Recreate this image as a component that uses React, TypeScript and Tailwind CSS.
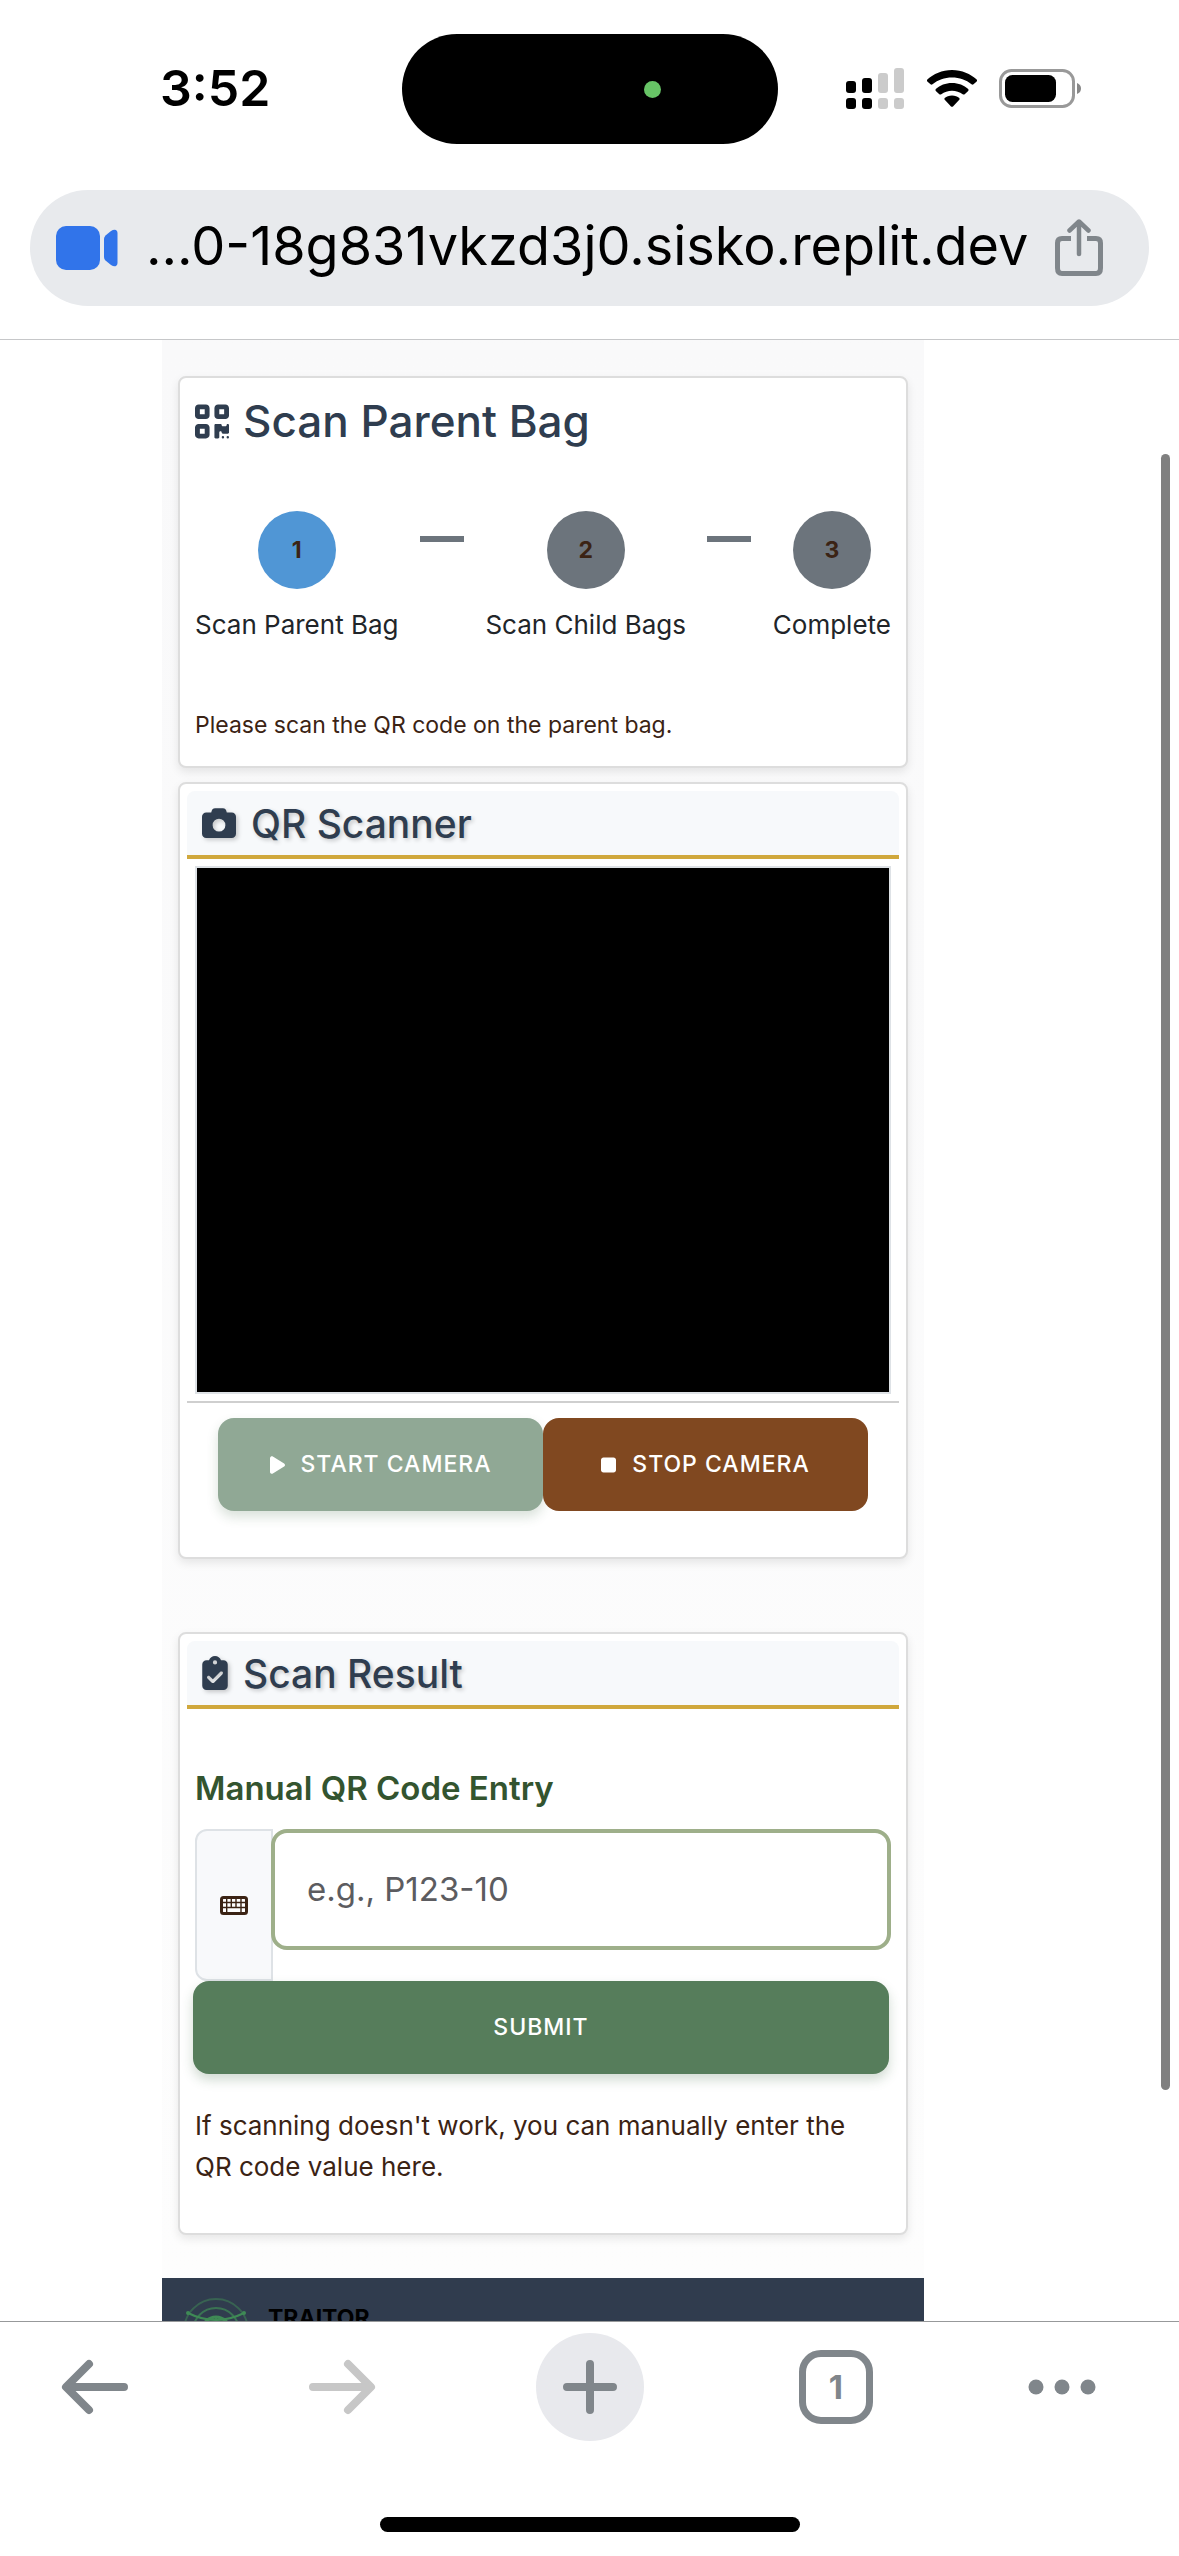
import type { ReactNode } from "react";
import { FaQrcode, FaCamera, FaPlay, FaStop, FaClipboardCheck } from "react-icons/fa6";

function StatusIcons() {
  return (
    <svg viewBox="846 67 235 41" className="h-[41px] w-[235px]" role="img" aria-label="Signal, Wi-Fi, battery">
      <rect x="846" y="80" width="10" height="12" rx="3" />
      <rect x="862" y="77" width="10" height="15" rx="3" />
      <rect x="846" y="97" width="10" height="11" rx="3" />
      <rect x="862" y="97" width="10" height="11" rx="3" />
      <g fill="#cbcbcb">
        <rect x="878" y="72" width="10" height="20" rx="3" />
        <rect x="894" y="67" width="10" height="25" rx="3" />
        <rect x="878" y="97" width="10" height="11" rx="3" />
        <rect x="894" y="97" width="10" height="11" rx="3" />
      </g>
      <path d="M952 69C942 69 933.500 73 927.300 78.500Q926.500 79.500 927.300 80.500L930.500 83.300Q931.500 84 932.500 83.300C938 79 944.500 76.600 952 76.600S966 79 971.500 83.300Q972.500 84 973.500 83.300L976.700 80.500Q977.500 79.500 976.700 78.500C970.500 73 962 69 952 69Z" />
      <path d="M952 82C945.500 82 940 84.300 935.800 88Q935 89 935.800 90L939.300 93.200Q940.300 94 941.300 93.200C944.300 91 948 89.800 952 89.800S959.700 91 962.700 93.200Q963.700 94 964.700 93.200L968.200 90Q969 89 968.200 88C964 84.300 958.500 82 952 82Z" />
      <path d="M952 94.500C949 94.500 946.500 95.500 944.700 97Q944 98 944.700 98.800L951 105.400Q952 106.200 953 105.400L959.300 98.800Q960 98 959.300 97C957.500 95.500 955 94.500 952 94.500Z" />
      <rect x="1000.500" y="69.500" width="73" height="36" rx="11" fill="none" stroke="#999" strokeWidth="3" />
      <rect x="1005" y="74" width="51" height="27" rx="7.500" />
      <path d="M1077 82Q1081 83.500 1081 87.500T1077 93Z" fill="#888" />
    </svg>
  );
}

function Card({ children, className }: { children: ReactNode; className: string }) {
  return (
    <section className={`rounded-lg border-2 border-[#dddddd] bg-white shadow-[0_4px_10px_rgba(0,0,0,0.09)] ${className}`}>
      {children}
    </section>
  );
}

function CardHeader({ icon, title }: { icon: ReactNode; title: string }) {
  return (
    <div className="mx-[7px] mt-[7px] flex h-[68px] items-center gap-[15px] rounded-t-lg border-b-4 border-[#d0a83c] bg-[#f7f9fb] px-[15px] text-[#2f3d4f]">
      <span className="drop-shadow-[2px_2px_2px_rgba(0,0,0,0.2)]">{icon}</span>
      <h2 className="text-[39px] leading-none font-medium [text-shadow:2px_2px_4px_rgba(0,0,0,0.2)]">{title}</h2>
    </div>
  );
}

function Step({ number, label, active = false }: { number: string; label: string; active?: boolean }) {
  return (
    <li className="flex flex-col items-center">
      <span
        className={`flex size-[78px] items-center justify-center rounded-full text-[23px] font-bold text-[#3b2314] ${active ? "bg-[#5096d5]" : "bg-[#6c747c]"}`}
      >
        {number}
      </span>
      <span className="mt-4 text-[26px] leading-10 whitespace-nowrap text-[#212529]">{label}</span>
    </li>
  );
}

function StepLine() {
  return <li aria-hidden="true" className="mt-[25px] h-1.5 w-11 bg-[#6c747c]" />;
}

export default function App() {
  return (
    <div className="flex h-screen flex-col overflow-hidden bg-white font-['Inter',sans-serif] text-black">
      <header className="shrink-0 border-b border-[#c6c7c9]">
        <div className="grid grid-cols-[1fr_auto_1fr] items-center pt-[34px]">
          <div className="pb-0.5 pl-40 text-[50px] leading-none font-semibold">3:52</div>
          <div className="flex h-[110px] w-[376px] items-center justify-end rounded-full bg-black pr-[117px]">
            <span className="size-[17px] rounded-full bg-[#67c466]" />
          </div>
          <div className="flex justify-end pr-[98px] pb-0.5">
            <StatusIcons />
          </div>
        </div>
        <div className="mx-[30px] mt-[46px] mb-[33px] flex h-[116px] items-center rounded-full bg-[#e8eaed] pr-[45px] pl-[26px]">
          <svg viewBox="0 0 62 44" className="h-11 w-[62px] shrink-0" fill="#3174ea" aria-hidden="true">
            <rect width="44" height="44" rx="10" />
            <path d="M48 13Q48 11 49.500 9.500L55 5Q58 3 60 4Q61.500 5 61.500 7V37Q61.500 39 60 40Q58 41 55 39L49.500 34.500Q48 33 48 31Z" />
          </svg>
          <input
            aria-label="Address"
            readOnly
            value="...0-18g831vkzd3j0.sisko.replit.dev"
            className="ml-7 h-20 min-w-0 flex-1 bg-transparent pb-1.5 text-[54px] outline-none"
          />
          <button aria-label="Share" className="shrink-0">
            <svg viewBox="0 0 50 58" className="h-[58px] w-[50px]" fill="none" stroke="#80868b" strokeWidth="5" strokeLinecap="round" strokeLinejoin="round">
              <path d="M17 19.500H8Q3.500 19.500 3.500 24V49Q3.500 54.500 8 54.500H42Q46.500 54.500 46.500 49V24Q46.500 19.500 42 19.500H33" strokeLinecap="butt" />
              <path d="M25 35V3M15.500 11.500L25 2.500L34.500 11.500" strokeWidth="4.500" />
            </svg>
          </button>
        </div>
      </header>

      <div className="relative min-h-0 flex-1 overflow-hidden border-b border-[#97999b] pr-[255px] pl-[162px]">
        <main className="bg-linear-to-b from-[#f9f9fa] to-[#fdfdfd] px-4 pt-9 pb-[43px]">
          <Card className="px-[15px] pb-[22px]">
            <h1 className="flex items-center gap-[14px] pt-[18px] text-[44px] leading-[50px] font-medium text-[#2f3d4f]">
              <FaQrcode className="h-[39px] w-[34px] shrink-0" />
              Scan Parent Bag
            </h1>
            <ol className="mt-[65px] flex justify-between">
              <Step number="1" label="Scan Parent Bag" active />
              <StepLine />
              <Step number="2" label="Scan Child Bags" />
              <StepLine />
              <Step number="3" label="Complete" />
            </ol>
            <p className="mt-[61px] text-[23px] leading-[38px] text-[#3b2314]">Please scan the QR code on the parent bag.</p>
          </Card>

          <Card className="mt-[14px] pb-[46px]">
            <CardHeader icon={<FaCamera className="size-[34px]" />} title="QR Scanner" />
            <div className="mx-[15px] mt-[7px] h-[528px] border-2 border-[#dee2e6] bg-black" />
            <hr className="mx-[7px] mt-[7px] border-t-2 border-[#cfcfcf]" />
            <div className="mx-[38px] mt-[15px] flex">
              <button className="flex h-[93px] flex-1 items-center justify-center gap-4 rounded-2xl bg-[#90a895] text-[23px] font-medium tracking-[1px] text-white shadow-[0_6px_12px_rgba(45,90,50,0.18)]">
                <FaPlay className="h-5 w-[15px]" />
                START CAMERA
              </button>
              <button className="relative flex h-[93px] flex-1 items-center justify-center gap-4 rounded-2xl bg-[#804820] text-[23px] font-medium tracking-[1px] text-white">
                <FaStop className="h-5 w-[15px]" />
                STOP CAMERA
              </button>
            </div>
          </Card>

          <Card className="mt-[73px] pb-[46px]">
            <CardHeader icon={<FaClipboardCheck className="h-[34px] w-[26px]" />} title="Scan Result" />
            <form className="px-[15px] pt-[57px]" onSubmit={(e) => e.preventDefault()}>
              <label htmlFor="qr" className="block text-[33px] leading-[44px] font-semibold text-[#33542f]">
                Manual QR Code Entry
              </label>
              <div className="mt-[19px] flex items-start">
                <span className="flex h-[152px] w-[78px] items-center justify-center rounded-l-xl border-2 border-[#dee2e6] bg-[#f8f9fb]">
                  <svg viewBox="0 0 28 19" className="h-[19px] w-7" aria-hidden="true">
                    <rect x="1.500" y="1.500" width="25" height="16" rx="2" fill="#fff" stroke="#3b2314" strokeWidth="3" />
                    <path d="M3 6.500H25M3 11.500H25M6.700 3V16M11.300 3V11.500M16 3V11.500M21 3V16" stroke="#3b2314" strokeWidth="1.400" />
                  </svg>
                </span>
                <input
                  id="qr"
                  placeholder="e.g., P123-10"
                  className="relative -ml-0.5 h-[121px] min-w-0 flex-1 rounded-2xl border-4 border-[#9eaf8a] bg-white px-8 pb-0.5 text-[33px] outline-none placeholder:text-[#5c5c60]"
                />
              </div>
              <button className="relative -ml-0.5 h-[93px] w-full rounded-2xl bg-[#567d5b] text-[23px] font-medium tracking-[1px] text-white shadow-[0_6px_12px_rgba(45,90,50,0.22)]">
                SUBMIT
              </button>
              <p className="mt-[31px] pr-6 text-[26px] leading-[41px] text-[#3b2314]">
                If scanning doesn't work, you can manually enter the QR code value here.
              </p>
            </form>
          </Card>
        </main>

        <footer className="flex h-[110px] items-start bg-[#303c4e] pt-5">
          <svg viewBox="0 0 66 66" className="ml-[21px] size-[66px]" fill="none" stroke="#3f8a55" strokeWidth="2" aria-hidden="true">
            <circle cx="33" cy="33" r="32" opacity="0.5" />
            <circle cx="33" cy="33" r="23" opacity="0.7" />
            <circle cx="33" cy="33" r="14" strokeWidth="3" />
            <path d="M5 15Q33 29 61 15M5 51Q33 37 61 51M33 19V47" />
            <circle cx="5" cy="15" r="1" />
            <circle cx="61" cy="15" r="1" />
          </svg>
          <span className="mt-0.5 ml-[19px] text-[23px] leading-9 font-bold text-black">TRAITOR</span>
        </footer>
        <div className="absolute top-[114px] right-[9px] bottom-[231px] w-[9px] rounded-full bg-[#808080]" />
      </div>

      <nav className="flex h-[234px] shrink-0 flex-col items-center justify-between pt-[11px] pb-6" aria-label="Browser toolbar">
        <div className="flex w-full items-center justify-between pr-[83px] pl-[61px] text-[#80868b]">
          <button aria-label="Back">
            <svg viewBox="0 0 68 64" className="h-16 w-[68px]" fill="none" stroke="currentColor" strokeWidth="8" strokeLinecap="round" strokeLinejoin="round">
              <path d="M63 32H6M28 9L5 32L28 55" />
            </svg>
          </button>
          <button aria-label="Forward" disabled className="mr-1 ml-6 text-[#c7c7c7]">
            <svg viewBox="0 0 68 64" className="h-16 w-[68px]" fill="none" stroke="currentColor" strokeWidth="8" strokeLinecap="round" strokeLinejoin="round">
              <path d="M5 32H62M40 9L63 32L40 55" />
            </svg>
          </button>
          <button aria-label="New tab" className="flex size-[108px] items-center justify-center rounded-full bg-[#e8e9ed]">
            <svg viewBox="0 0 56 56" className="size-14" stroke="currentColor" strokeWidth="8" strokeLinecap="round">
              <path d="M28 5V51M5 28H51" />
            </svg>
          </button>
          <button aria-label="Tabs" className="flex size-[74px] items-center justify-center rounded-[22px] border-[7px] border-[#80868b] text-[33px] leading-none font-bold">
            1
          </button>
          <button aria-label="More">
            <svg viewBox="0 0 68 16" className="h-4 w-[68px]" fill="currentColor">
              <circle cx="8" cy="8" r="7.500" />
              <circle cx="34" cy="8" r="7.500" />
              <circle cx="60" cy="8" r="7.500" />
            </svg>
          </button>
        </div>
        <div className="h-[15px] w-[420px] rounded-full bg-black" />
      </nav>
    </div>
  );
}
